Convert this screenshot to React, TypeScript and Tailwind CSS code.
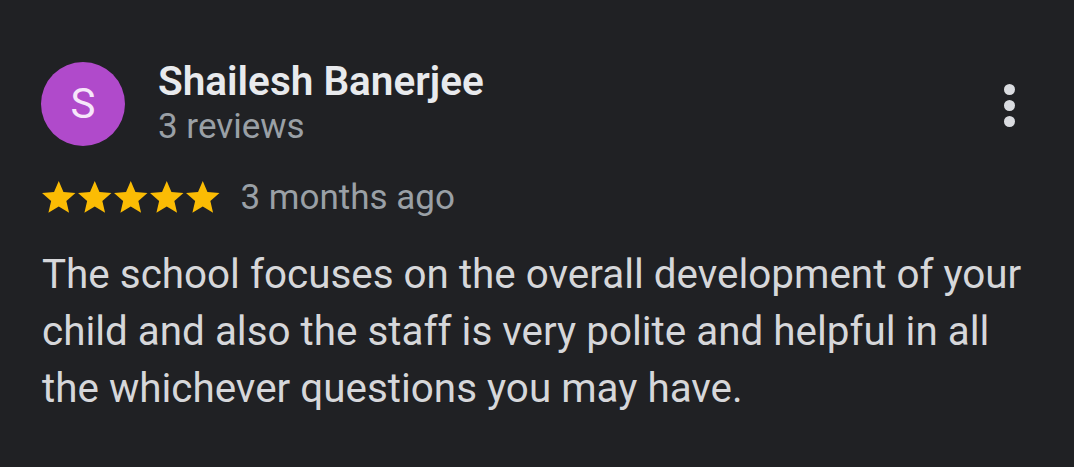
import React from "react";

const Star = () => (
  <svg width="33.5" height="31.8" viewBox="2 2 20 19" className="block">
    <path fill="#FBBC04" d="M12 17.27L18.18 21l-1.64-7.03L22 9.24l-7.19-.61L12 2 9.19 8.63 2 9.24l5.46 4.73L5.82 21z" />
  </svg>
);

export default function App() {
  return (
    <div
      className="w-[1074px] h-[467px] bg-[#202124] overflow-hidden"
      style={{ fontFamily: "Roboto, 'Noto Sans', sans-serif" }}
    >
      <div className="flex items-start pl-[41px] pr-[59px] pt-[57px]">
        <div className="mt-[5px] w-[84px] h-[84px] rounded-full bg-[#B04ACB] flex items-center justify-center text-[#F6E6FA] text-[42px] leading-none shrink-0">
          S
        </div>
        <div className="ml-[33px] flex-1">
          <div className="text-[40.5px] font-semibold text-[#E8EAED] leading-[48px]">Shailesh Banerjee</div>
          <div className="mt-[2px] text-[35px] text-[#9AA0A6] leading-[40px]">3 reviews</div>
        </div>
        <div className="flex flex-col gap-[5px] mt-[27px]">
          <span className="block w-[11px] h-[11px] rounded-full bg-[#DADCE0]" />
          <span className="block w-[11px] h-[11px] rounded-full bg-[#DADCE0]" />
          <span className="block w-[11px] h-[11px] rounded-full bg-[#DADCE0]" />
        </div>
      </div>
      <div className="flex items-center pl-[42px] mt-[30px] h-[40px]">
        <div className="flex gap-[2.5px]">
          <Star />
          <Star />
          <Star />
          <Star />
          <Star />
        </div>
        <span className="ml-[21px] mt-[2px] text-[35px] text-[#9AA0A6] leading-[40px]">3 months ago</span>
      </div>
      <p className="pl-[42px] pr-[38px] mt-[29px] text-[40.4px] leading-[57px] text-[#D6D7DA]">
        The school focuses on the overall development of your child and also the staff is very polite and helpful in all the whichever questions you may have.
      </p>
    </div>
  );
}
